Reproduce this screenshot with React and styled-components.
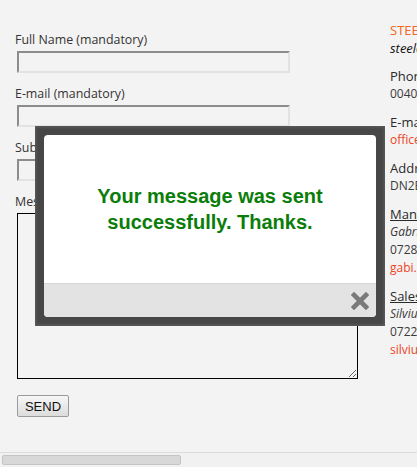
import React from "react";
import styled, { createGlobalStyle } from "styled-components";

const GlobalStyle = createGlobalStyle`
  html, body {
    margin: 0;
    padding: 0;
    background: #f3f3f3;
    overflow: hidden;
  }
`;

const Window = styled.div`
  width: 417px;
  height: 467px;
  display: flex;
  flex-direction: column;
  background: #f3f3f3;
`;

const Viewport = styled.div`
  flex: 1;
  position: relative;
  overflow: hidden;
`;

const Page = styled.div`
  width: 900px;
  display: flex;
  padding: 21px 0 0 15px;
  font-family: "Open Sans", "Noto Sans", sans-serif;
  color: #333;
`;

const Form = styled.form`
  width: 375px;
  padding-top: 10px;
  display: flex;
  flex-direction: column;
`;

const Label = styled.label`
  display: block;
  font-size: 12.4px;
  line-height: 18px;
  height: 18px;
  margin-bottom: 2px;
`;

const Input = styled.input`
  display: block;
  box-sizing: border-box;
  width: 273px;
  height: 22px;
  margin: 0 0 12px 2px;
  border: 2px solid;
  border-color: #8c8c8c #e2e2e2 #e2e2e2 #8c8c8c;
  background: #f3f3f3;
`;

const Textarea = styled.textarea`
  display: block;
  box-sizing: border-box;
  width: 341px;
  height: 166px;
  margin: 0 0 16px 2px;
  border: 1px solid #000;
  background: #f3f3f3;
`;

const SendButton = styled.button`
  align-self: flex-start;
  box-sizing: border-box;
  width: 52px;
  height: 22px;
  margin-left: 2px;
  padding: 0;
  font-family: "Liberation Sans", Arial, sans-serif;
  font-size: 13px;
  color: #111;
  border: 1px solid #9a9a9a;
  border-radius: 2px;
  background: linear-gradient(#f7f7f7, #dcdcdc);
`;

const Info = styled.div`
  display: flex;
  flex-direction: column;
  gap: 10px;
  white-space: nowrap;
`;

const Block = styled.div`
  display: flex;
  flex-direction: column;
`;

const Line = styled.span`
  font-size: ${(p) => (p.$head ? "13px" : "12px")};
  line-height: 18px;
  color: ${(p) => p.$color || (p.$head ? "#2a2a2a" : "#3a3a3a")};
  font-style: ${(p) => (p.$italic ? "italic" : "normal")};
  text-decoration: ${(p) => (p.$under ? "underline" : "none")};
`;

const Scrollbar = styled.div`
  height: 15px;
  box-sizing: border-box;
  border-top: 1px solid #dcdcdc;
  background: #f1f1f1;
  padding: 2px 0 0 2px;
`;

const Thumb = styled.div`
  width: 179px;
  height: 10px;
  box-sizing: border-box;
  border: 1px solid #c4c4c4;
  border-radius: 2px;
  background: #d8d8d8;
`;

const Lightbox = styled.div`
  position: absolute;
  left: 35px;
  top: 126px;
  width: 350px;
  height: 200px;
  box-sizing: border-box;
  padding: 9px;
  background: #474747;
  box-shadow: inset 0 0 3px 1px #5e5e5e;
`;

const Dialog = styled.div`
  height: 100%;
  display: flex;
  flex-direction: column;
  border-radius: 4px;
  overflow: hidden;
  background: #fff;
`;

const Message = styled.div`
  flex: 1;
  display: flex;
  align-items: center;
  justify-content: center;
  text-align: center;
  font-family: "Liberation Sans", Arial, sans-serif;
  font-weight: bold;
  font-size: 20px;
  line-height: 26px;
  color: #0a7d0a;
`;

const DialogFooter = styled.div`
  height: 33px;
  display: flex;
  align-items: center;
  justify-content: flex-end;
  padding-right: 7px;
  border-top: 1px solid #d6d6d6;
  background: #e3e3e3;
`;

const CloseIcon = () => (
  <svg width="18" height="18" viewBox="0 0 18 18">
    <path d="M3 3 L15 15 M15 3 L3 15" stroke="#7a7a7a" strokeWidth="4.6" strokeLinecap="square" />
  </svg>
);

const contacts = [
  [
    { text: "STEEL CONSTRUCT", color: "#f26522", head: true },
    { text: "steelconstruct.ro", italic: true, color: "#111", head: true },
  ],
  [{ text: "Phone:", head: true }, { text: "0040 234 567 890" }],
  [{ text: "E-mail:", head: true }, { text: "office@steelconstruct.ro", color: "#ee4423" }],
  [{ text: "Address:", head: true }, { text: "DN2E 85, Bacau" }],
  [
    { text: "Manager", head: true, under: true },
    { text: "Gabriel Popescu", italic: true },
    { text: "0728 123 456" },
    { text: "gabi.popescu@steelconstruct.ro", color: "#ee4423" },
  ],
  [
    { text: "Sales", head: true, under: true },
    { text: "Silviu Ionescu", italic: true },
    { text: "0722 654 321" },
    { text: "silviu.ionescu@steelconstruct.ro", color: "#ee4423" },
  ],
];

export default function App() {
  return (
    <Window>
      <GlobalStyle />
      <Viewport>
        <Page>
          <Form onSubmit={(e) => e.preventDefault()}>
            <Label>Full Name (mandatory)</Label>
            <Input type="text" />
            <Label>E-mail (mandatory)</Label>
            <Input type="text" />
            <Label>Subject</Label>
            <Input type="text" />
            <Label>Message</Label>
            <Textarea />
            <SendButton type="submit">SEND</SendButton>
          </Form>
          <Info>
            {contacts.map((group, i) => (
              <Block key={i}>
                {group.map((l, j) => (
                  <Line key={j} $head={l.head} $italic={l.italic} $under={l.under} $color={l.color}>
                    {l.text}
                  </Line>
                ))}
              </Block>
            ))}
          </Info>
        </Page>
        <Lightbox>
          <Dialog>
            <Message>
              Your message was sent
              <br />
              successfully. Thanks.
            </Message>
            <DialogFooter>
              <CloseIcon />
            </DialogFooter>
          </Dialog>
        </Lightbox>
      </Viewport>
      <Scrollbar>
        <Thumb />
      </Scrollbar>
    </Window>
  );
}
